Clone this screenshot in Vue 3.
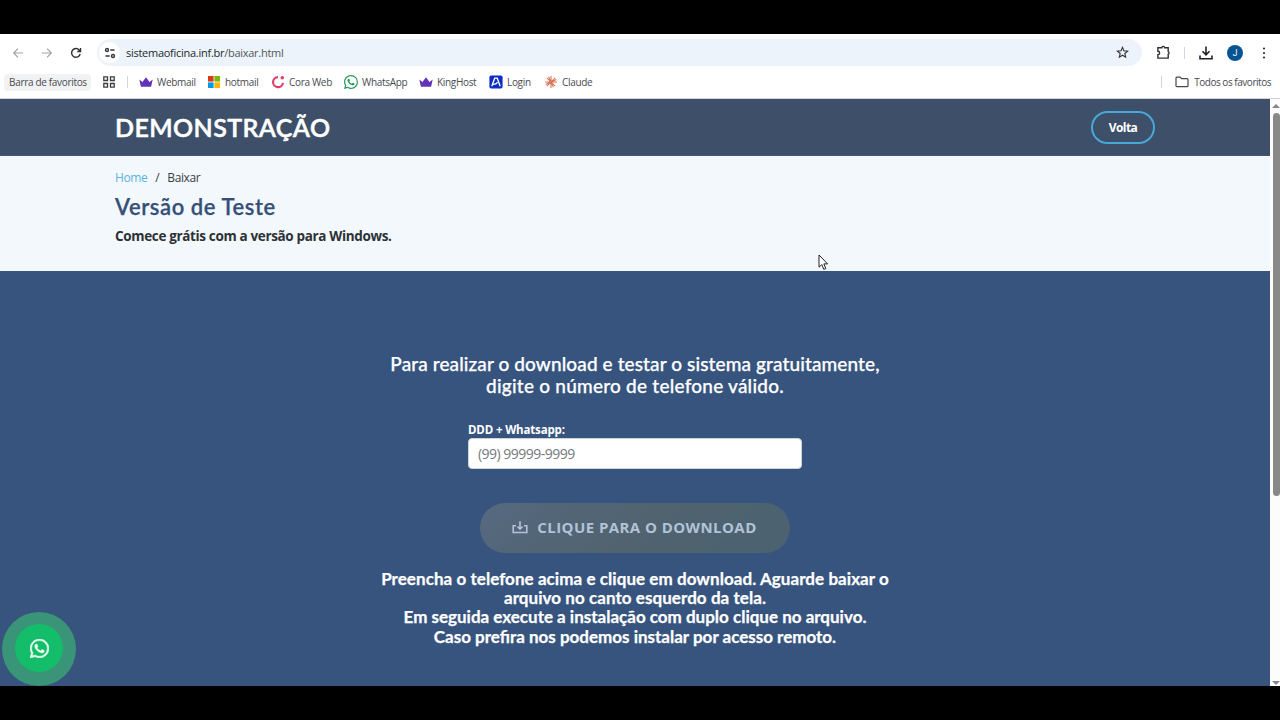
<template>
  <div class="screen">
    <div class="browser">
      <div class="toolbar">
        <svg class="nav-icon back" viewBox="0 0 16 16"><path d="M14 8H3M8 3L3 8l5 5" /></svg>
        <svg class="nav-icon forward" viewBox="0 0 16 16"><path d="M2 8h11M8 3l5 5-5 5" /></svg>
        <svg class="nav-icon reload" viewBox="0 0 16 16"><path d="M12.8 9.2A5 5 0 1 1 11.7 4.5L13 6M13.2 2.4V6.2H9.4" /></svg>
        <div class="address">
          <span class="site-info">
            <svg viewBox="0 0 12 12"><circle cx="3" cy="3" r="1.5" /><path d="M6.3 3h4.2M1.5 9h4.2" /><circle cx="9" cy="9" r="1.5" /></svg>
          </span>
          <span class="url">sistemaoficina.inf.br<span class="path">/baixar.html</span></span>
          <svg class="star" viewBox="0 0 14 14"><path d="M7 1.5l1.5 3.7 4 .3-3 2.6.9 3.9L7 9.9 3.6 12l.9-3.9-3-2.6 4-.3z" /></svg>
        </div>
        <svg class="puzzle" viewBox="0 0 16 16"><path d="M2 3h4.2a1.5 1.5 0 0 1 3 0H13v4a1.5 1.5 0 0 1 0 2.8V14H2v-3.6a1.9 1.9 0 0 0 0-3.8z" /></svg>
        <span class="divider"></span>
        <svg class="download" viewBox="0 0 16 16"><path d="M8 1.5v8M4.5 6.3L8 9.8l3.5-3.5M2 10.5v3.3h12v-3.3" /></svg>
        <span class="avatar">J</span>
        <svg class="dots" viewBox="0 0 4 14"><circle cx="2" cy="2.5" r="1.1" /><circle cx="2" cy="7" r="1.1" /><circle cx="2" cy="11.5" r="1.1" /></svg>
      </div>
      <div class="bookmarks">
        <span class="bar-label">Barra de favoritos</span>
        <svg class="apps" viewBox="0 0 12 12"><path d="M.8.8h3.7v3.7H.8zM7.5.8h3.7v3.7H7.5zM.8 7.5h3.7v3.7H.8zM7.5 7.5h3.7v3.7H7.5z" /></svg>
        <span class="divider"></span>
        <div class="links">
          <span v-for="item in bookmarks" :key="item.name" class="bookmark">
            <svg v-if="item.icon === 'crown'" viewBox="0 0 14 14"><path fill="#6433b5" d="M.3 4.5l3.2 2.4L7 2.2l3.5 4.7 3.2-2.4-1.6 7.2H1.9z" /></svg>
            <svg v-else-if="item.icon === 'windows'" viewBox="0 0 14 14"><path fill="#d83b1b" d="M1 1h5.6v5.6H1z" /><path fill="#78b80a" d="M7.4 1H13v5.6H7.4z" /><path fill="#0099e5" d="M1 7.4h5.6V13H1z" /><path fill="#fbb400" d="M7.4 7.4H13V13H7.4z" /></svg>
            <svg v-else-if="item.icon === 'cora'" viewBox="0 0 14 14"><path d="M7 2.1A5 5 0 1 0 12 7.8" fill="none" stroke="#df3f69" stroke-width="2.2" /><circle cx="11.3" cy="2.7" r="1.8" fill="#df3f69" /></svg>
            <svg v-else-if="item.icon === 'whatsapp'" viewBox="0 0 16 16"><path :d="whatsapp" fill="#249656" /></svg>
            <svg v-else-if="item.icon === 'login'" viewBox="0 0 14 14"><rect x=".4" y=".4" width="13.2" height="13.2" rx="1.8" fill="#0d2fc4" /><path d="M2.8 11.2L5.7 3.2h2.5l3 8M4 9.4c2.4 0 3.8-.7 4.6-2" fill="none" stroke="#fff" stroke-width="1.3" /></svg>
            <svg v-else viewBox="0 0 14 14"><path d="M7 1v12M1 7h12M2.8 2.8l8.4 8.4M11.2 2.8l-8.4 8.4M4.6 1.6l4.8 10.8M1.6 9.4l10.8-4.8" fill="none" stroke="#d9775a" stroke-width="1.1" /></svg>
            <span>{{ item.name }}</span>
          </span>
        </div>
        <span class="divider"></span>
        <svg class="folder" viewBox="0 0 14 12"><path d="M1 2.2c0-.6.3-1 .9-1h3.3l1.4 1.5h5.3c.6 0 1.1.4 1.1 1v6c0 .6-.5 1-1.1 1H1.9c-.6 0-.9-.4-.9-1z" /></svg>
        <span class="all">Todos os favoritos</span>
      </div>
    </div>

    <div class="viewport">
      <div class="page">
        <header class="header">
          <h1>DEMONSTRAÇÃO</h1>
          <a class="back-btn">Volta</a>
        </header>
        <section class="breadcrumbs">
          <div class="crumbs"><a>Home</a><span class="slash">/</span><span>Baixar</span></div>
          <h2>Versão de Teste</h2>
          <p>Comece grátis com a versão para Windows.</p>
        </section>
        <main class="content">
          <h3>
            <span class="t1">Para realizar o download e testar o sistema gratuitamente,</span><br />
            <span class="t2">digite o número de telefone válido.</span>
          </h3>
          <div class="field">
            <label for="phone">DDD + Whatsapp:</label>
            <input id="phone" v-model="phone" type="text" placeholder="(99) 99999-9999" />
          </div>
          <button class="download-btn" :disabled="!phone">
            <svg viewBox="0 0 16 16"><path d="M4 6.7H1.2v6.8h13.6V6.7H12M8 2.2v7.3M5.5 7.5L8 10l2.5-2.5" /></svg>
            <span>CLIQUE PARA O DOWNLOAD</span>
          </button>
          <h4>
            <span class="n1">Preencha o telefone acima e clique em download. Aguarde baixar o</span><br />
            <span class="n2">arquivo no canto esquerdo da tela.</span><br />
            <span>Em seguida execute a instalação com duplo clique no arquivo.</span><br />
            <span>Caso prefira nos podemos instalar por acesso remoto.</span>
          </h4>
        </main>
      </div>
      <div class="scrollbar">
        <span class="arrow up"></span>
        <span class="thumb"></span>
        <span class="arrow down"></span>
      </div>
      <a class="whatsapp">
        <span><svg viewBox="0 0 16 16"><path :d="whatsapp" /></svg></span>
      </a>
    </div>

    <svg class="cursor" viewBox="0 0 11 17"><path d="M1 1v12.2l2.8-2.6 2 4.8 2-.9-2-4.6h3.8z" /></svg>
  </div>
</template>

<script setup>
import { ref } from 'vue';

const phone = ref('');

const bookmarks = [
  { name: 'Webmail', icon: 'crown' },
  { name: 'hotmail', icon: 'windows' },
  { name: 'Cora Web', icon: 'cora' },
  { name: 'WhatsApp', icon: 'whatsapp' },
  { name: 'KingHost', icon: 'crown' },
  { name: 'Login', icon: 'login' },
  { name: 'Claude', icon: 'burst' },
];

// Shared by the bookmark and the floating button
const whatsapp = 'M13.601 2.326A7.85 7.85 0 0 0 7.994 0C3.627 0 .068 3.558.064 7.926c0 1.399.366 2.76 1.057 3.965L0 16l4.204-1.102a7.9 7.9 0 0 0 3.79.965h.004c4.368 0 7.926-3.558 7.93-7.93A7.9 7.9 0 0 0 13.6 2.326zM7.994 14.521a6.6 6.6 0 0 1-3.356-.92l-.24-.144-2.494.654.666-2.433-.156-.251a6.56 6.56 0 0 1-1.007-3.505c0-3.626 2.957-6.584 6.591-6.584a6.56 6.56 0 0 1 4.66 1.931 6.56 6.56 0 0 1 1.928 4.66c-.004 3.639-2.961 6.592-6.592 6.592m3.615-4.934c-.197-.099-1.17-.578-1.353-.646-.182-.065-.315-.099-.445.099-.133.197-.513.646-.627.775-.114.133-.232.148-.43.05-.197-.1-.836-.308-1.592-.985-.59-.525-.985-1.175-1.103-1.372-.114-.198-.011-.304.088-.403.087-.088.197-.232.296-.346.1-.114.133-.198.198-.33.065-.134.034-.248-.015-.347-.05-.099-.445-1.076-.612-1.47-.16-.389-.323-.335-.445-.34-.114-.007-.247-.007-.38-.007a.73.73 0 0 0-.529.247c-.182.198-.691.677-.691 1.654s.71 1.916.81 2.049c.098.133 1.394 2.132 3.383 2.992.47.205.84.326 1.129.418.475.152.904.129 1.246.08.38-.058 1.171-.48 1.338-.943.164-.464.164-.86.114-.943-.049-.084-.182-.133-.38-.232';
</script>

<style>
body {
  margin: 0;
  overflow: hidden;
}
</style>

<style scoped>
.screen {
  box-sizing: border-box;
  position: relative;
  width: 1280px;
  height: 720px;
  padding: 34px 0;
  background: #000;
  overflow: hidden;
  font-family: "Open Sans", sans-serif;
}
svg {
  display: block;
  flex: none;
}
.browser {
  box-sizing: border-box;
  height: 65px;
  background: #fff;
  border-bottom: 1px solid #cfd4dc;
}
.toolbar {
  display: flex;
  align-items: center;
  height: 27px;
  padding: 5px 0 0 11px;
}
.nav-icon {
  width: 14px;
  height: 14px;
  margin-right: 15px;
  fill: none;
  stroke: #a2a3a6;
  stroke-width: 1.3;
}
.nav-icon.reload {
  margin-right: 14px;
  stroke: #303236;
  stroke-width: 1.6;
}
.address {
  box-sizing: border-box;
  display: flex;
  align-items: center;
  width: 1045px;
  height: 27px;
  padding: 0 13px 0 2px;
  background: #edf3fa;
  border-radius: 14px;
}
.site-info {
  display: flex;
  align-items: center;
  justify-content: center;
  width: 21px;
  height: 21px;
  background: #fff;
  border-radius: 50%;
}
.site-info svg {
  width: 12px;
  height: 12px;
  fill: none;
  stroke: #33363a;
  stroke-width: 1.4;
}
.url {
  flex: 1;
  margin-left: 6px;
  font-size: 11px;
  letter-spacing: -0.27px;
  color: #24272b;
}
.path {
  color: #54575c;
}
.star {
  width: 13px;
  height: 13px;
  fill: none;
  stroke: #303236;
  stroke-width: 1.2;
}
.puzzle {
  width: 15px;
  height: 15px;
  margin-left: 14px;
  fill: none;
  stroke: #303236;
  stroke-width: 1.5;
}
.divider {
  width: 1px;
  height: 12px;
  background: #cbd8e8;
}
.toolbar .divider {
  margin-left: 13px;
}
.download {
  width: 16px;
  height: 16px;
  margin-left: 13px;
  fill: none;
  stroke: #202226;
  stroke-width: 1.6;
}
.avatar {
  width: 16px;
  height: 16px;
  margin-left: 13px;
  border-radius: 50%;
  background: #075492;
  color: #fff;
  font-family: Roboto, sans-serif;
  font-size: 8.5px;
  line-height: 16px;
  text-align: center;
}
.dots {
  width: 4px;
  height: 14px;
  margin-left: 19px;
  fill: #303236;
}
.bookmarks {
  display: flex;
  align-items: center;
  height: 32px;
  padding: 0 9px 0 4px;
  font-size: 10px;
  line-height: 16px;
  letter-spacing: -0.32px;
  color: #484b50;
  white-space: nowrap;
}
.bar-label {
  box-sizing: border-box;
  width: 87px;
  height: 17px;
  padding-left: 5px;
  border-radius: 4px;
  background: #f1f2f3;
}
.apps {
  width: 12px;
  height: 12px;
  margin: 0 12px;
  fill: none;
  stroke: #3b3d41;
  stroke-width: 1.3;
}
.links {
  display: grid;
  grid-template-columns: 68px 64px 73px 75px 70px 55px 1fr;
  flex: 1;
  margin-left: 11px;
}
.bookmark {
  display: flex;
  align-items: center;
  gap: 4px;
}
.bookmark svg {
  width: 14px;
  height: 14px;
}
.folder {
  width: 14px;
  height: 12px;
  margin: 0 5px 0 13px;
  fill: none;
  stroke: #44474b;
  stroke-width: 1.2;
}
.all {
  letter-spacing: -0.47px;
}
.viewport {
  position: relative;
  display: flex;
  height: 587px;
}
.page {
  width: 1270px;
}
.header {
  box-sizing: border-box;
  display: flex;
  align-items: center;
  justify-content: space-between;
  height: 57px;
  padding: 0 115px;
  background: #3d4f69;
  border-bottom: 1px solid #46576d;
}
h1,
h2,
h3,
h4 {
  margin: 0;
  font-family: Lato, sans-serif;
  white-space: nowrap;
  -webkit-text-stroke: 0.25px currentColor;
}
h1 {
  font-size: 25px;
  line-height: 30px;
  font-weight: 600;
  letter-spacing: 0.4px;
  color: #fff;
  -webkit-text-stroke-width: 0.5px;
}
.back-btn {
  box-sizing: border-box;
  width: 64px;
  height: 33px;
  border: 2px solid #47a9d7;
  border-radius: 17px;
  color: #fff;
  font-size: 12px;
  line-height: 29px;
  font-weight: 700;
  letter-spacing: -0.6px;
  text-align: center;
}
.breadcrumbs {
  box-sizing: border-box;
  height: 115px;
  padding: 12px 115px 0;
  background: #f3f8fc;
  color: #393d42;
}
.crumbs {
  font-size: 12px;
  line-height: 19px;
  letter-spacing: -0.4px;
}
.crumbs a {
  color: #5ab4dc;
}
.slash {
  margin: 0 8px;
}
h2 {
  margin-top: 6px;
  font-size: 22px;
  line-height: 28px;
  font-weight: 600;
  letter-spacing: 0.57px;
  color: #344f78;
}
p {
  margin: 5px 0 0;
  font-size: 13.5px;
  line-height: 20px;
  font-weight: 700;
  letter-spacing: -0.35px;
  color: #2d3135;
}
.content {
  box-sizing: border-box;
  display: flex;
  flex-direction: column;
  align-items: center;
  height: 415px;
  padding-top: 82px;
  background: #37547e;
  color: #fff;
  text-align: center;
}
h3 {
  font-size: 19px;
  line-height: 22px;
  font-weight: 500;
}
.t1 {
  letter-spacing: 0.11px;
}
.t2 {
  letter-spacing: 0.23px;
}
.field {
  width: 334px;
  margin-top: 25px;
  text-align: left;
}
label {
  display: block;
  font-size: 11.5px;
  line-height: 16px;
  font-weight: 700;
  letter-spacing: -0.16px;
}
input {
  box-sizing: border-box;
  display: block;
  width: 334px;
  height: 31px;
  padding: 0 9px;
  border: 1px solid #ced4da;
  border-radius: 4px;
  background: #fff;
  font-family: "Open Sans", sans-serif;
  font-size: 14px;
  letter-spacing: -0.52px;
}
input::placeholder {
  color: #75797d;
  opacity: 1;
}
.download-btn {
  display: flex;
  align-items: center;
  justify-content: center;
  gap: 9px;
  width: 310px;
  height: 50px;
  margin-top: 34px;
  padding: 0 1px 2px 0;
  border: 0;
  border-radius: 25px;
  background: linear-gradient(135deg, #566980, #50636f 50%, #4b6270);
  color: #b1c2d9;
  font-family: "Open Sans", sans-serif;
  font-size: 15px;
  font-weight: 700;
  letter-spacing: 0.43px;
  white-space: nowrap;
}
.download-btn svg {
  width: 16px;
  height: 16px;
  fill: none;
  stroke: #b1c2d9;
  stroke-width: 1.6;
}
h4 {
  margin-top: 16px;
  font-size: 17px;
  line-height: 19.2px;
  font-weight: 700;
}
.n1,
.n2 {
  letter-spacing: 0.06px;
}
.scrollbar {
  display: flex;
  flex-direction: column;
  align-items: center;
  width: 10px;
  padding: 5px 0 1px 2px;
  box-sizing: border-box;
  background: #fcfcfc;
}
.arrow {
  border: 4px solid transparent;
}
.arrow.up {
  border-top: 0;
  border-bottom-color: #858585;
}
.arrow.down {
  margin-top: auto;
  border-bottom: 0;
  border-top-color: #858585;
}
.thumb {
  width: 7px;
  height: 383px;
  margin-top: 5px;
  border-radius: 4px;
  background: #888;
}
.whatsapp {
  position: absolute;
  left: 2px;
  bottom: 0;
  display: flex;
  align-items: center;
  justify-content: center;
  width: 74px;
  height: 74px;
  border-radius: 50%;
  background: #399478;
}
.whatsapp span {
  display: flex;
  align-items: center;
  justify-content: center;
  width: 48px;
  height: 48px;
  margin-bottom: 2px;
  border-radius: 50%;
  background: #14bd69;
}
.whatsapp svg {
  width: 19px;
  height: 19px;
  fill: #e9fff2;
  stroke: #e9fff2;
  stroke-width: 0.4;
}
.cursor {
  position: absolute;
  left: 818px;
  top: 254px;
  width: 11px;
  height: 17px;
  fill: #fff;
  stroke: #222;
}
</style>
